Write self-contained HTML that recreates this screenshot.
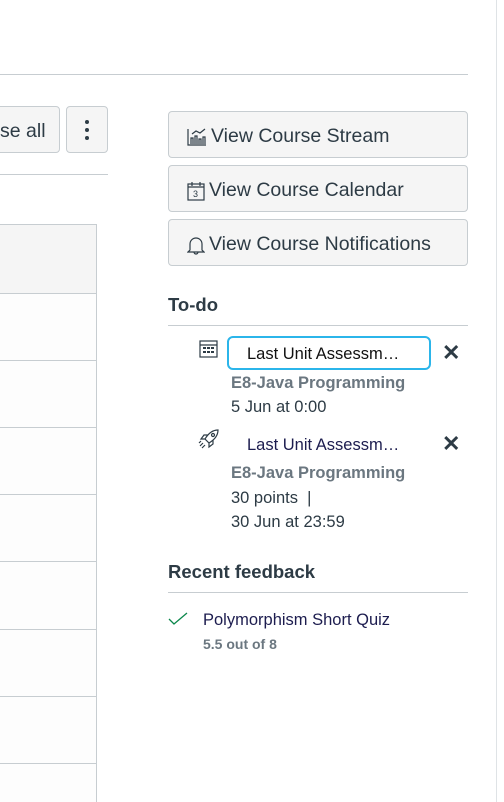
<!DOCTYPE html>
<html><head><meta charset="utf-8"><style>
*{box-sizing:border-box;margin:0;padding:0}
html,body{width:504px;height:802px;overflow:hidden}
body{background:#fff;font-family:"Liberation Sans",sans-serif;color:#2d3b45;position:relative}
.a{position:absolute}
.btn{position:absolute;background:#f5f5f5;border:1px solid #c7cdd1;border-radius:4px;font-size:19.5px;color:#2d3b45;display:flex;align-items:center;padding-top:4px}
.rb{left:168px;width:300px;height:47px;padding-left:18px}
.rb svg{margin-right:4px}
.hl{position:absolute;height:1px;background:#c7cdd1}
.g{color:#6b7780;font-weight:bold;font-size:16.5px}
.t{font-size:16.5px;color:#2d3b45}
.x{position:absolute;font-size:22px;font-weight:bold;color:#2d3b45}
</style></head><body>
<div class="hl" style="left:0;top:74px;width:468px"></div>
<div class="a" style="left:496px;top:0;width:1px;height:802px;background:#dfe3e6"></div>
<div class="btn" style="left:-20px;top:106px;width:80px;height:47px;padding-left:19px">se all</div>
<div class="btn" style="left:66px;top:106px;width:42px;height:47px;justify-content:center;padding-top:0"><svg width="6" height="22"><circle cx="3" cy="3" r="2" fill="#2d3b45"/><circle cx="3" cy="11" r="2" fill="#2d3b45"/><circle cx="3" cy="19" r="2" fill="#2d3b45"/></svg></div>
<div class="hl" style="left:0;top:174px;width:108px"></div>
<div class="a" style="left:-1px;top:224px;width:98px;height:600px;border:1px solid #c7cdd1;background:#fdfdfd"></div>
<div class="a" style="left:0;top:225px;width:96px;height:68px;background:#f5f5f5"></div>
<div class="hl" style="left:0;top:293px;width:96px"></div>
<div class="hl" style="left:0;top:360px;width:96px"></div>
<div class="hl" style="left:0;top:427px;width:96px"></div>
<div class="hl" style="left:0;top:494px;width:96px"></div>
<div class="hl" style="left:0;top:561px;width:96px"></div>
<div class="hl" style="left:0;top:629px;width:96px"></div>
<div class="hl" style="left:0;top:696px;width:96px"></div>
<div class="hl" style="left:0;top:763px;width:96px"></div>

<div class="btn rb" style="top:111px"><svg width="20" height="18" viewBox="0 0 20 18" fill="none" stroke="#2d3b45" stroke-width="1.2"><path d="M1 1v16h18M4 16v-6h2v6M8 16v-8h2v8M12 16v-5h2v5M16 16v-7h2v7M5 6l4-3 4 2 5-4"/></svg>View Course Stream</div>
<div class="btn rb" style="top:165px"><svg width="18" height="20" viewBox="0 0 18 20" fill="none" stroke="#2d3b45" stroke-width="1.2"><rect x="1" y="3" width="16" height="16"/><path d="M1 6h16M5 1v4M13 1v4"/><text x="6" y="16" font-size="9" fill="#2d3b45" stroke="none" font-family="Liberation Sans">3</text></svg>View Course Calendar</div>
<div class="btn rb" style="top:219px"><svg width="18" height="20" viewBox="0 0 18 20" fill="none" stroke="#2d3b45" stroke-width="1.2"><path d="M3 15V9a6 6 0 0 1 12 0v6l2 2H1zM7 17a2 2 0 0 0 4 0"/></svg>View Course Notifications</div>

<div class="a" style="left:168px;top:294px;font-size:18.5px;font-weight:bold">To-do</div>
<div class="hl" style="left:168px;top:325px;width:300px"></div>
<svg class="a" style="left:199px;top:339px" width="19" height="19" viewBox="0 0 19 19" fill="none" stroke="#2d3b45" stroke-width="1.2"><rect x="1" y="2" width="17" height="16"/><path d="M1 6h17"/><g fill="#2d3b45" stroke="none"><rect x="4" y="8" width="3" height="2"/><rect x="8" y="8" width="3" height="2"/><rect x="12" y="8" width="3" height="2"/><rect x="4" y="12" width="3" height="2"/><rect x="8" y="12" width="3" height="2"/><rect x="12" y="12" width="3" height="2"/></g></svg>
<div class="a" style="left:227px;top:336px;width:204px;height:34px;border:2px solid #2bb5ea;border-radius:6px"></div>
<div class="a t" style="left:247px;top:345px;color:#111">Last Unit Assessm…</div>
<div class="x" style="left:442px;top:340px">✕</div>
<div class="a g" style="left:231px;top:374px">E8-Java Programming</div>
<div class="a t" style="left:231px;top:398px">5 Jun at 0:00</div>
<svg class="a" style="left:198px;top:428px" width="22" height="22" viewBox="0 0 22 22" fill="none" stroke="#2d3b45" stroke-width="1.2"><path d="M20 2c-6 0-10 4-13 9l4 4c5-3 9-7 9-13zM7 11l-4 0 3-4 4 0M11 15v4l4-3v-4M5 15l-3 3M7 17l-3 3M3 13l-2 2"/><circle cx="15" cy="7" r="1.5"/></svg>
<div class="a t" style="left:247px;top:436px;color:#1d1d4f">Last Unit Assessm…</div>
<div class="x" style="left:442px;top:431px">✕</div>
<div class="a g" style="left:231px;top:464px">E8-Java Programming</div>
<div class="a t" style="left:231px;top:489px">30 points &nbsp;|</div>
<div class="a t" style="left:231px;top:513px">30 Jun at 23:59</div>

<div class="a" style="left:168px;top:561px;font-size:18.5px;font-weight:bold">Recent feedback</div>
<div class="hl" style="left:168px;top:592px;width:300px"></div>
<svg class="a" style="left:168px;top:612px" width="20" height="14" viewBox="0 0 20 14" fill="none" stroke="#0b874b" stroke-width="1.3"><path d="M1 7l5 5L19 1"/></svg>
<div class="a t" style="left:203px;top:611px;color:#1d1d4f">Polymorphism Short Quiz</div>
<div class="a" style="left:203px;top:636px;font-size:14px;font-weight:bold;color:#6b7780">5.5 out of 8</div>
</body></html>
